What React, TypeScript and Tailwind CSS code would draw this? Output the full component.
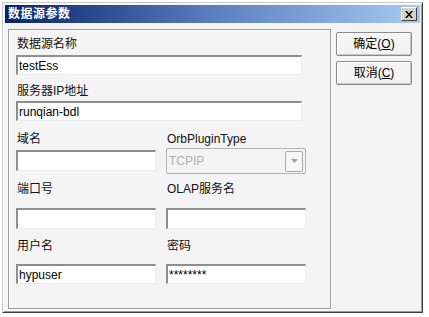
import React from 'react';

const font = { fontFamily: '"Liberation Sans", "Noto Sans CJK SC", sans-serif' };

function Field({ value, className }: { value?: string; className: string }) {
  return (
    <div
      className={`h-[20px] bg-white border-t-2 border-l-2 border-r border-b border-t-[#8e8e8e] border-l-[#8e8e8e] border-r-[#ececec] border-b-[#ececec] flex items-center pl-[1px] text-[12px] text-black leading-none ${className}`}
    >
      {value}
    </div>
  );
}

function Label({ text, className = '' }: { text: string; className?: string }) {
  return <div className={`h-[14px] text-[12px] leading-[14px] text-[#111] pl-[1px] ${className}`}>{text}</div>;
}

function DlgButton({ text, hot }: { text: string; hot: string }) {
  return (
    <div className="w-[76px] h-[24px] bg-[#f3f3f3] border border-[#8a8a8a] rounded-[2px] shadow-[inset_1px_1px_0_#ffffff,inset_-1px_-1px_0_#c8c8c8] flex items-center justify-center text-[12px] text-black">
      <span>{text}(</span>
      <span className="underline">{hot}</span>
      <span>)</span>
    </div>
  );
}

export default function App() {
  return (
    <div className="w-[429px] h-[317px] bg-white pt-[2px] pl-[2px]" style={font}>
      <div className="w-[421px] h-[311px] bg-[#f4f4f4] border border-[#c8c8c8] border-r-[#404040] border-b-[#404040] shadow-[inset_1px_1px_0_#ffffff,inset_-1px_-1px_0_#9a9a9a] p-[1px]">
        <div className="h-[18px] mx-[1px] mt-[1px] bg-gradient-to-r from-[#0a246a] via-[#5a7fc0] to-[#a6caf0] flex items-center justify-between pl-[3px] pr-[3px]">
          <span className="text-white font-bold text-[12px] leading-none tracking-[0.5px]">数据源参数</span>
          <div className="w-[16px] h-[14px] bg-[#d4d0c8] border border-t-white border-l-white border-r-[#404040] border-b-[#404040] flex items-center justify-center">
            <svg width="8" height="7" viewBox="0 0 8 7">
              <path d="M0 0h2l2 2.5L6 0h2L5 3.5 8 7H6L4 4.5 2 7H0l3-3.5z" fill="#000" />
            </svg>
          </div>
        </div>
        <div className="flex pt-[6px] pl-[4px]">
          <div className="w-[323px] h-[280px] border border-[#9a9a9a] shadow-[1px_1px_0_#ffffff,inset_1px_1px_0_#ffffff] pl-[7px] pt-[7px] flex flex-col">
            <Label text="数据源名称" />
            <Field value="testEss" className="w-[286px] mt-[4px]" />
            <Label text="服务器IP地址" className="mt-[9px]" />
            <Field value="runqian-bdl" className="w-[286px] mt-[3px]" />
            <div className="flex gap-[10px] mt-[11px]">
              <div className="flex flex-col w-[140px]">
                <Label text="域名" />
                <Field className="w-[140px] h-[21px] mt-[4px]" />
              </div>
              <div className="flex flex-col w-[140px]">
                <Label text="OrbPluginType" />
                <div className="mt-[2px] w-[140px] h-[26px] border border-[#b4b4b4] rounded-[2px] bg-[#f4f4f4] flex items-center justify-between pl-[2px] pr-[2px]">
                  <span className="text-[12px] text-[#b0b0b0]">TCPIP</span>
                  <div className="w-[18px] h-[21px] border border-[#a8a8a8] rounded-[2px] bg-[#f7f7f7] flex items-center justify-center">
                    <svg width="7" height="4" viewBox="0 0 7 4">
                      <path d="M0 0h7L3.5 4z" fill="#a0a0a0" />
                    </svg>
                  </div>
                </div>
              </div>
            </div>
            <div className="flex gap-[10px] mt-[8px]">
              <div className="flex flex-col w-[140px]">
                <Label text="端口号" />
                <Field className="w-[140px] h-[21px] mt-[12px]" />
              </div>
              <div className="flex flex-col w-[140px]">
                <Label text="OLAP服务名" />
                <Field className="w-[140px] h-[21px] mt-[12px]" />
              </div>
            </div>
            <div className="flex gap-[10px] mt-[10px]">
              <div className="flex flex-col w-[140px]">
                <Label text="用户名" />
                <Field value="hypuser" className="w-[140px] mt-[11px]" />
              </div>
              <div className="flex flex-col w-[140px]">
                <Label text="密码" />
                <Field value="********" className="w-[140px] mt-[11px] text-[11px]" />
              </div>
            </div>
          </div>
          <div className="flex flex-col gap-[5px] ml-[5px] pt-[3px]">
            <DlgButton text="确定" hot="O" />
            <DlgButton text="取消" hot="C" />
          </div>
        </div>
      </div>
    </div>
  );
}
